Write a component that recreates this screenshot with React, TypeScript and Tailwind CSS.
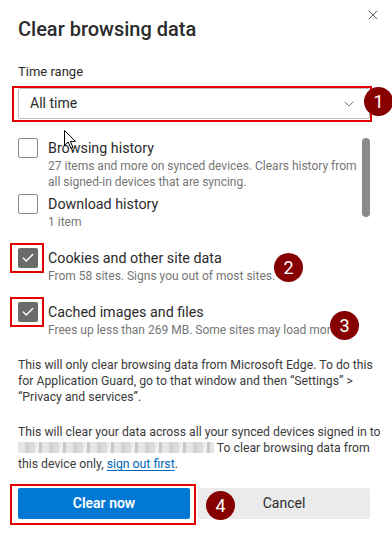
import { Check, ChevronDown, X } from 'lucide-react';

const font = "font-['Roboto','Liberation_Sans',sans-serif]";

function Badge({ n, className }: { n: number; className: string }) {
  return (
    <div
      className={`absolute w-[29px] h-[29px] rounded-full bg-[#870000] text-white text-[18px] leading-none flex items-center justify-center ${className}`}
    >
      {n}
    </div>
  );
}

function Item({
  title,
  sub,
  checked,
  marked,
  className = '',
}: {
  title: string;
  sub: string;
  checked?: boolean;
  marked?: boolean;
  className?: string;
}) {
  return (
    <div className={`flex gap-[10px] ${className}`}>
      <div className="relative shrink-0">
        {checked ? (
          <div className="w-[20px] h-[20px] rounded-[2px] bg-[#6b6b6b] flex items-center justify-center">
            <Check size={14} strokeWidth={2.5} className="text-white" />
          </div>
        ) : (
          <div className="w-[20px] h-[20px] rounded-[2px] border border-[#8a8a8a] bg-white" />
        )}
        {marked && (
          <span className="absolute -left-[8px] -top-[5px] w-[34px] h-[30px] border-2 border-[#e50000]" />
        )}
      </div>
      <div className="pr-[10px]">
        <div className="text-[14.3px] leading-[20px] text-[#2b2b2b]">{title}</div>
        <div className="text-[12px] leading-[16px] text-[#767676] whitespace-nowrap">{sub}</div>
      </div>
    </div>
  );
}

export default function App() {
  return (
    <div className={`relative w-[392px] h-[543px] overflow-hidden bg-white pl-[18px] pr-[22px] pt-[8px] ${font}`}>
      {/* Header */}
      <div className="flex items-start justify-between">
        <div className="mt-[7px] text-[20px] leading-[28px] font-medium text-[#2b2b2b]">
          Clear browsing data
        </div>
        <X size={16} strokeWidth={1.2} className="-mr-[11px] -mt-[1px] text-[#333]" />
      </div>

      <div className="mt-[20px] text-[13px] leading-[18px] text-[#2b2b2b]">Time range</div>

      {/* Dropdown */}
      <div className="relative mt-[7px]">
        <div className="h-[31px] rounded-[2px] border border-[#bdbdbd] flex items-center justify-between pl-[11px] pr-[12px]">
          <span className="text-[14px] text-[#2b2b2b]">All time</span>
          <ChevronDown size={16} strokeWidth={1.2} className="text-[#555]" />
        </div>
        <span className="absolute -left-[6px] -top-[2px] -right-[2px] -bottom-[3px] border-2 border-[#e50000]" />
      </div>

      {/* Options list */}
      <div className="relative mt-[19px]">
        <div className="flex gap-[10px]">
          <div className="w-[20px] h-[20px] shrink-0 rounded-[2px] border border-[#8a8a8a] bg-white" />
          <div>
            <div className="text-[14.3px] leading-[20px] text-[#2b2b2b]">Browsing history</div>
            <div className="text-[12px] leading-[16px] text-[#767676]">
              27 items and more on synced devices. Clears history from
              <br />
              all signed-in devices that are syncing.
            </div>
          </div>
        </div>
        <Item className="mt-[4px]" title="Download history" sub="1 item" />
        <Item
          className="mt-[18px]"
          title="Cookies and other site data"
          sub="From 58 sites. Signs you out of most sites."
          checked
          marked
        />
        <Item
          className="mt-[18px]"
          title="Cached images and files"
          sub="Frees up less than 269 MB. Some sites may load more"
          checked
          marked
        />
        <div className="absolute right-0 top-0 w-[8px] h-[79px] rounded-full bg-[#8a8a8a]" />
      </div>

      <p className="mt-[19px] text-[12.25px] leading-[16px] text-[#3b3b3b] whitespace-nowrap">
        This will only clear browsing data from Microsoft Edge. To do this
        <br />
        for Application Guard, go to that window and then “Settings” &gt;
        <br />
        “Privacy and services”.
      </p>

      <p className="mt-[19px] text-[12.25px] leading-[16px] text-[#3b3b3b] whitespace-nowrap">
        This will clear your data across all your synced devices signed in to
        <br />
        <span className="inline-block align-middle w-[196px] h-[11px] -mt-[2px] bg-[repeating-linear-gradient(90deg,#e6e6e6_0_7px,#d2d2d2_7px_11px,#dcdcdc_11px_17px,#efefef_17px_21px,#c8c8c8_21px_24px)]" />{' '}
        To clear browsing data from
        <br />
        this device only,{' '}
        <span className="text-[#0067b8] underline underline-offset-2">sign out first</span>.
      </p>

      {/* Buttons */}
      <div className="mt-[16px] flex gap-[8px]">
        <div className="relative flex-1">
          <div className="h-[31px] rounded-[2px] bg-[#0078d4] text-white text-[14px] font-semibold flex items-center justify-center">
            Clear now
          </div>
          <span className="absolute -left-[8px] -top-[4px] -right-[6px] -bottom-[6px] border-2 border-[#e50000]" />
        </div>
        <div className="flex-1 h-[31px] rounded-[2px] bg-[#ebebeb] text-[#2b2b2b] text-[14px] flex items-center justify-center">
          Cancel
        </div>
      </div>

      {/* Mouse pointer */}
      <svg className="absolute left-[64px] top-[130px]" width="13" height="20" viewBox="0 0 13 20">
        <path
          d="M0.5 0.5 L0.5 15.5 L4.2 12 L6.8 18.2 L8.9 17.3 L6.4 11.4 L11.5 11.4 Z"
          fill="white"
          stroke="black"
          strokeWidth="1"
          strokeLinejoin="round"
        />
      </svg>

      <Badge n={1} className="left-[364px] top-[87px]" />
      <Badge n={2} className="left-[274px] top-[253px]" />
      <Badge n={3} className="left-[330px] top-[311px]" />
      <Badge n={4} className="left-[206px] top-[491px]" />
    </div>
  );
}
